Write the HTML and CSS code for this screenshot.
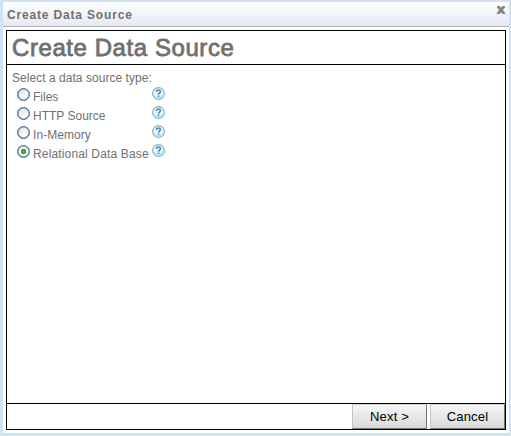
FILE: index.html
```html
<!DOCTYPE html>
<html lang="en">
<head>
<meta charset="utf-8">
<title>Create Data Source</title>
<link rel="stylesheet" href="styles.css">
</head>
<body>
<svg class="defs" aria-hidden="true">
  <defs>
    <symbol id="help" viewBox="0 0 13 13">
      <circle cx="6.5" cy="6.5" r="5.9" fill="#e6f7fb" stroke="#86b5c0" stroke-width="1.2"/>
      <path d="M1.8 8.2Q6.5 13.6 11.2 8.2" fill="none" stroke="#b3dae3" stroke-width="1"/>
      <path d="M4.5 4.9V4.4Q4.7 3.1 6.5 3.1T8.5 4.6C8.5 5.8 6.5 5.9 6.5 7.7M6.5 8.5V10" fill="none" stroke="#4286bd" stroke-width="1.5"/>
    </symbol>
  </defs>
</svg>
<main class="window">
  <header class="titlebar">
    <span class="caption">Create Data Source</span>
    <svg class="close" viewBox="0 0 8 8"><path d="M0 0H2.5L4 1.7 5.5 0H8V1.5L5.8 4 8 6.5V8H5.5L4 6.3 2.5 8H0V6.5L2.2 4 0 1.5Z" fill="#858585"/></svg>
  </header>
  <section class="wizard">
    <h1 class="heading">Create Data Source</h1>
    <div class="content">
      <p class="prompt">Select a data source type:</p>
      <div class="option"><span class="radio"></span><span class="label">Files</span><svg class="help"><use href="#help"/></svg></div>
      <div class="option"><span class="radio"></span><span class="label">HTTP Source</span><svg class="help"><use href="#help"/></svg></div>
      <div class="option"><span class="radio"></span><span class="label memory">In-Memory</span><svg class="help"><use href="#help"/></svg></div>
      <div class="option"><span class="radio checked"></span><span class="label relational">Relational Data Base</span><svg class="help"><use href="#help"/></svg></div>
    </div>
    <footer class="actions">
      <button class="button">Next &gt;</button>
      <button class="button">Cancel</button>
    </footer>
  </section>
</main>
</body>
</html>
```
FILE: styles.css
```css
* { box-sizing: border-box; }
body {
  margin: 0;
  height: 436px;
  padding: 2px 2px 3px 3px;
  background: #d0e2f4;
  font-family: "Liberation Sans", Arial, sans-serif;
  font-size: 12px;
  color: #707070;
  overflow: hidden;
}
.defs { display: none; }
.window {
  display: flex;
  flex-direction: column;
  height: 431px;
  padding: 0 3px 3px;
  background: #fff;
}
.titlebar {
  display: flex;
  justify-content: space-between;
  height: 25px;
  margin: 0 -3px 3px;
  padding: 0 4px;
  border-bottom: 1px solid #b6b6b6;
  background: linear-gradient(#fff, #e4e8f3);
}
.caption { font-weight: bold; line-height: 27px; letter-spacing: 0.83px; }
.close { width: 8px; height: 8px; margin-top: 4px; }
.wizard {
  display: flex;
  flex: 1;
  flex-direction: column;
  border: 1px solid #000;
}
.heading {
  height: 34px;
  margin: 0;
  padding-left: 5px;
  border-bottom: 1px solid #000;
  font-size: 24px;
  font-weight: normal;
  line-height: 33px;
  letter-spacing: 0.57px;
  -webkit-text-stroke: 0.8px #707070;
}
.content { flex: 1; padding: 6px 5px; }
.prompt { height: 14px; margin: 0; line-height: 14px; letter-spacing: 0.04px; }
.option {
  display: grid;
  grid-template-columns: 16px 119px 13px;
  height: 19px;
  padding-left: 5px;
}
.radio {
  width: 13px;
  height: 13px;
  margin-top: 3px;
  border: 1px solid #3c6894;
  border-radius: 50%;
  background: linear-gradient(135deg, #dcdcd7, #fff 75%);
  box-shadow: inset 0 0 0 0.6px #6f91b3;
}
.radio.checked { background: radial-gradient(circle, #40c840 0, #20a020 2.2px, #f4f4f2 3px); }
.label { line-height: 14px; padding-top: 5px; white-space: nowrap; }
.memory { letter-spacing: 0.06px; }
.relational { letter-spacing: 0.15px; }
.help { width: 13px; height: 13px; margin-top: 2px; }
.actions {
  display: flex;
  justify-content: flex-end;
  gap: 3px;
  height: 26px;
  border-top: 1px solid #000;
}
.button {
  width: 75px;
  height: 25px;
  padding: 0;
  border: 1px solid;
  border-color: #d2d2d2 #747474 #747474 #c4c4c4;
  background: linear-gradient(#f7f7f7, #d9d9d9);
  color: #000;
  font: 13px "Liberation Sans", Arial, sans-serif;
  letter-spacing: 0.2px;
}
```
